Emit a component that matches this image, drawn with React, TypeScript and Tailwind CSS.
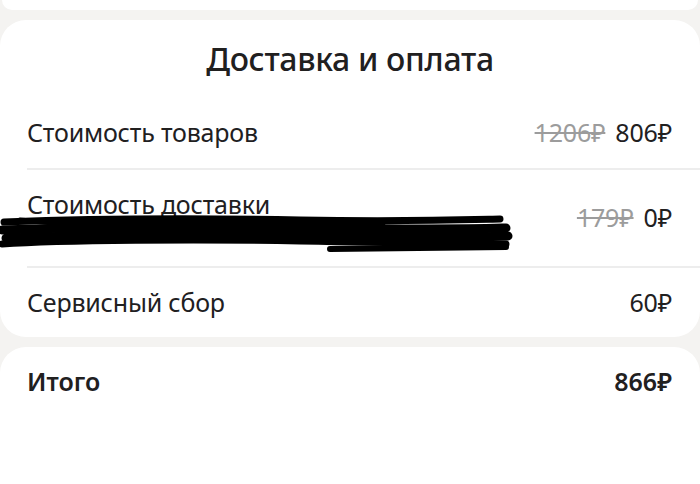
import React from "react";

function Scribble() {
  return (
    <svg
      className="absolute left-0 top-[44px] pointer-events-none"
      width="520"
      height="50"
      viewBox="0 0 520 50"
    >
      <g stroke="#000" strokeLinecap="round" fill="none">
        <path d="M4 8 C 80 5, 200 4, 300 6 S 460 6, 500 5" strokeWidth="7" />
        <path d="M2 16 C 90 13, 220 12, 330 14 S 470 15, 506 14" strokeWidth="9" />
        <path d="M6 24 C 100 21, 230 20, 340 22 S 480 23, 508 22" strokeWidth="9" />
        <path d="M2 30 C 60 26, 200 25, 300 27 S 460 30, 506 30" strokeWidth="7" />
        <path d="M330 35 C 390 34, 450 34, 506 33" strokeWidth="6" />
        <path d="M60 13 C 160 10, 260 9, 380 12" strokeWidth="11" />
        <path d="M20 6 L 110 14" strokeWidth="5" />
      </g>
    </svg>
  );
}

function Price({ old, value }: { old?: string; value: string }) {
  return (
    <div className="flex items-baseline gap-[10px]">
      {old && <span className="text-[#9c9c9c] line-through decoration-[1.5px]">{old}</span>}
      <span>{value}</span>
    </div>
  );
}

export default function App() {
  const font = { fontFamily: '"Noto Sans", "DejaVu Sans", sans-serif' };
  return (
    <div className="w-[700px] h-[484px] bg-[#f4f3f1] overflow-hidden text-[#21201f]" style={font}>
      <div className="h-[10px] bg-white rounded-b-[24px] mx-[2px]" />
      <div className="mt-[10px] bg-white rounded-[26px] h-[317px] flex flex-col">
        <div className="h-[78px] flex items-center justify-center">
          <h1 className="text-[32px] font-medium tracking-[-0.3px]">Доставка и оплата</h1>
        </div>
        <div className="h-[70px] flex items-center justify-between pl-[27px] pr-[28px] text-[25px] tracking-[-0.2px]">
          <span>Стоимость товаров</span>
          <Price old="1206₽" value="806₽" />
        </div>
        <div className="ml-[27px] h-[2px] bg-[#ededed]" />
        <div className="relative h-[96px] flex items-center justify-between pl-[27px] pr-[28px] text-[25px] tracking-[-0.2px]">
          <div className="flex flex-col -mt-[26px]">
            <span>Стоимость доставки</span>
          </div>
          <Price old="179₽" value="0₽" />
          <Scribble />
        </div>
        <div className="ml-[27px] h-[2px] bg-[#ededed]" />
        <div className="flex-1 flex items-center justify-between pl-[27px] pr-[28px] text-[25px] tracking-[-0.2px]">
          <span>Сервисный сбор</span>
          <Price value="60₽" />
        </div>
      </div>
      <div className="mt-[10px] bg-white rounded-t-[26px] h-[200px]">
        <div className="h-[70px] flex items-center justify-between pl-[27px] pr-[28px] text-[25px] font-semibold">
          <span>Итого</span>
          <span>866₽</span>
        </div>
      </div>
    </div>
  );
}
